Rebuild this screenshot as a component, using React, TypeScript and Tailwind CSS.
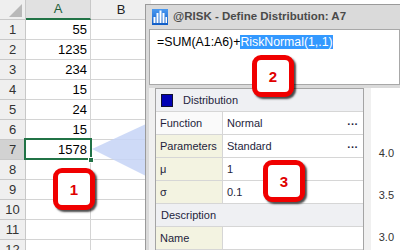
import React from 'react';

const cells = ['55', '1235', '234', '15', '24', '15', '1578', '', '', '', '', ''];

function Callout({ n, className }: { n: string; className: string }) {
    return (
        <div
            className={`absolute w-[42px] h-[42px] rounded-[9px] border-[5px] border-[#f00000] bg-white flex items-center justify-center shadow-[2px_2px_2px_rgba(0,0,0,0.7)] ${className}`}
        >
            <span className="text-[15px] font-bold text-[#e00000] leading-none">{n}</span>
        </div>
    );
}

function RiskIcon() {
    return (
        <svg width="16" height="16" viewBox="0 0 16 16">
            <defs>
                <linearGradient id="rk" x1="0" y1="0" x2="0" y2="1">
                    <stop offset="0" stopColor="#4a9af2" />
                    <stop offset="1" stopColor="#0f5cc6" />
                </linearGradient>
            </defs>
            <rect width="16" height="16" fill="url(#rk)" />
            <rect x="1.5" y="8" width="2" height="6" fill="#fff" />
            <rect x="4.5" y="4" width="2" height="10" fill="#fff" />
            <rect x="7.5" y="1.5" width="2" height="12.5" fill="#fff" />
            <rect x="10.5" y="4" width="2" height="10" fill="#fff" />
            <rect x="13.5" y="8" width="1.5" height="6" fill="#fff" />
        </svg>
    );
}

function PropRow({ label, value, dots, cream = true }: { label: string; value: string; dots?: boolean; cream?: boolean }) {
    return (
        <div className="flex h-[23px] border-b border-[#d6d6d6]">
            <div className={`w-[67px] border-r border-[#d6d6d6] flex items-center pl-[4px] ${cream ? 'bg-[#f3f3e1]' : 'bg-[#fafafa]'}`}>
                {label}
            </div>
            <div className="flex-1 bg-white flex items-center pl-[4px] pr-[5px] justify-between">
                <span>{value}</span>
                {dots && <span className="font-bold tracking-[0.5px] leading-none pb-[4px]">...</span>}
            </div>
        </div>
    );
}

function Category({ label, icon }: { label: string; icon?: boolean }) {
    return (
        <div className="flex h-[23px] items-center border-b border-[#d6d6d6] bg-[#eff0f3] pl-[5px] gap-[10px]">
            {icon && <div className="w-[12px] h-[13px] bg-[#0000b4] border border-[#101030]" />}
            <span>{label}</span>
        </div>
    );
}

export default function App() {
    return (
        <div className="relative w-[400px] h-[250px] overflow-hidden bg-white font-['Liberation_Sans',Arial,sans-serif]">
            {/* Spreadsheet */}
            <div className="flex flex-col text-[13px]">
                <div className="flex h-[20px]">
                    <div className="relative w-[26px] bg-[#efefef] border-r border-b border-[#c8c8c8]">
                        <svg className="absolute left-[9px] top-[4px]" width="13" height="13" viewBox="0 0 13 13">
                            <polygon points="13,0 13,13 0,13" fill="#b9b9b9" />
                        </svg>
                    </div>
                    <div className="w-[65px] bg-[#e1e1e1] border-r border-[#c8c8c8] border-b-2 border-b-[#217346] flex items-center justify-center text-[#1d5e3a]">
                        A
                    </div>
                    <div className="w-[60px] bg-[#efefef] border-b border-[#c8c8c8] flex items-center justify-center text-[#222]">
                        B
                    </div>
                </div>
                {cells.map((v, i) => (
                    <div key={i} className="flex h-[20px]">
                        <div
                            className={`w-[26px] border-r border-b border-[#c8c8c8] flex items-center justify-center text-[#333] ${i === 6 ? 'bg-[#d2d2d2]' : 'bg-[#efefef]'}`}
                        >
                            {i + 1}
                        </div>
                        <div className="w-[65px] border-r border-b border-[#d4d4d4] flex items-center justify-end pr-[3px] text-black">
                            {v}
                        </div>
                        <div className="w-[60px] border-b border-[#d4d4d4]" />
                    </div>
                ))}
            </div>

            {/* selected cell A7 */}
            <div className="absolute left-[24px] top-[138px] w-[68px] h-[22px] border-2 border-[#217346]" />
            <div className="absolute left-[88px] top-[157px] w-[6px] h-[6px] bg-[#217346] border border-white" />

            {/* pointer wedge */}
            <svg className="absolute left-0 top-0" width="400" height="250">
                <polygon points="92,149 146,124 146,176" fill="#c6d4f6" fillOpacity="0.85" />
            </svg>

            {/* @RISK window */}
            <div className="absolute left-[145px] top-[4px] w-[255px] h-[246px] bg-[#dadada] border-l border-t border-[#9a9a9a] flex flex-col pl-[3px]">
                <div className="h-[25px] flex items-center gap-[5px] pl-[3px] pb-[1px]">
                    <RiskIcon />
                    <span className="text-[11.5px] font-bold text-[#4a4a4a]">@RISK - Define Distribution: A7</span>
                </div>
                <div className="h-[58px] bg-white border border-[#a8a8a8] pl-[7px] pt-[5px]">
                    <div className="text-[12.3px] leading-[14px] text-black whitespace-nowrap">
                        =SUM(A1:A6)+<span className="bg-[#3399ff] text-white">RiskNormal(1,.1)</span>
                    </div>
                </div>
                <div className="flex-1 bg-[#f0f0f0] border-t-[3px] border-[#dadada] flex pl-[6px] text-[11px] text-[#1e1e3c]">
                    <div className="w-[209px] bg-white border-l border-r border-t border-[#a4a4a4] flex flex-col">
                        <Category label="Distribution" icon />
                        <PropRow label="Function" value="Normal" dots cream={false} />
                        <PropRow label="Parameters" value="Standard" dots />
                        <PropRow label="μ" value="1" />
                        <PropRow label="σ" value="0.1" />
                        <Category label="Description" />
                        <PropRow label="Name" value="" />
                    </div>
                    <div className="ml-[7px] flex-1 bg-white flex flex-col items-end pr-[6px] pt-[58px] text-[11px] text-[#333]">
                        <div className="h-[14px] leading-[14px] mb-[28px]">4.0</div>
                        <div className="h-[14px] leading-[14px] mb-[28px]">3.5</div>
                        <div className="h-[14px] leading-[14px]">3.0</div>
                    </div>
                </div>
            </div>

            <Callout n="1" className="left-[53px] top-[168px]" />
            <Callout n="2" className="left-[252px] top-[55px]" />
            <Callout n="3" className="left-[263px] top-[160px]" />
        </div>
    );
}
